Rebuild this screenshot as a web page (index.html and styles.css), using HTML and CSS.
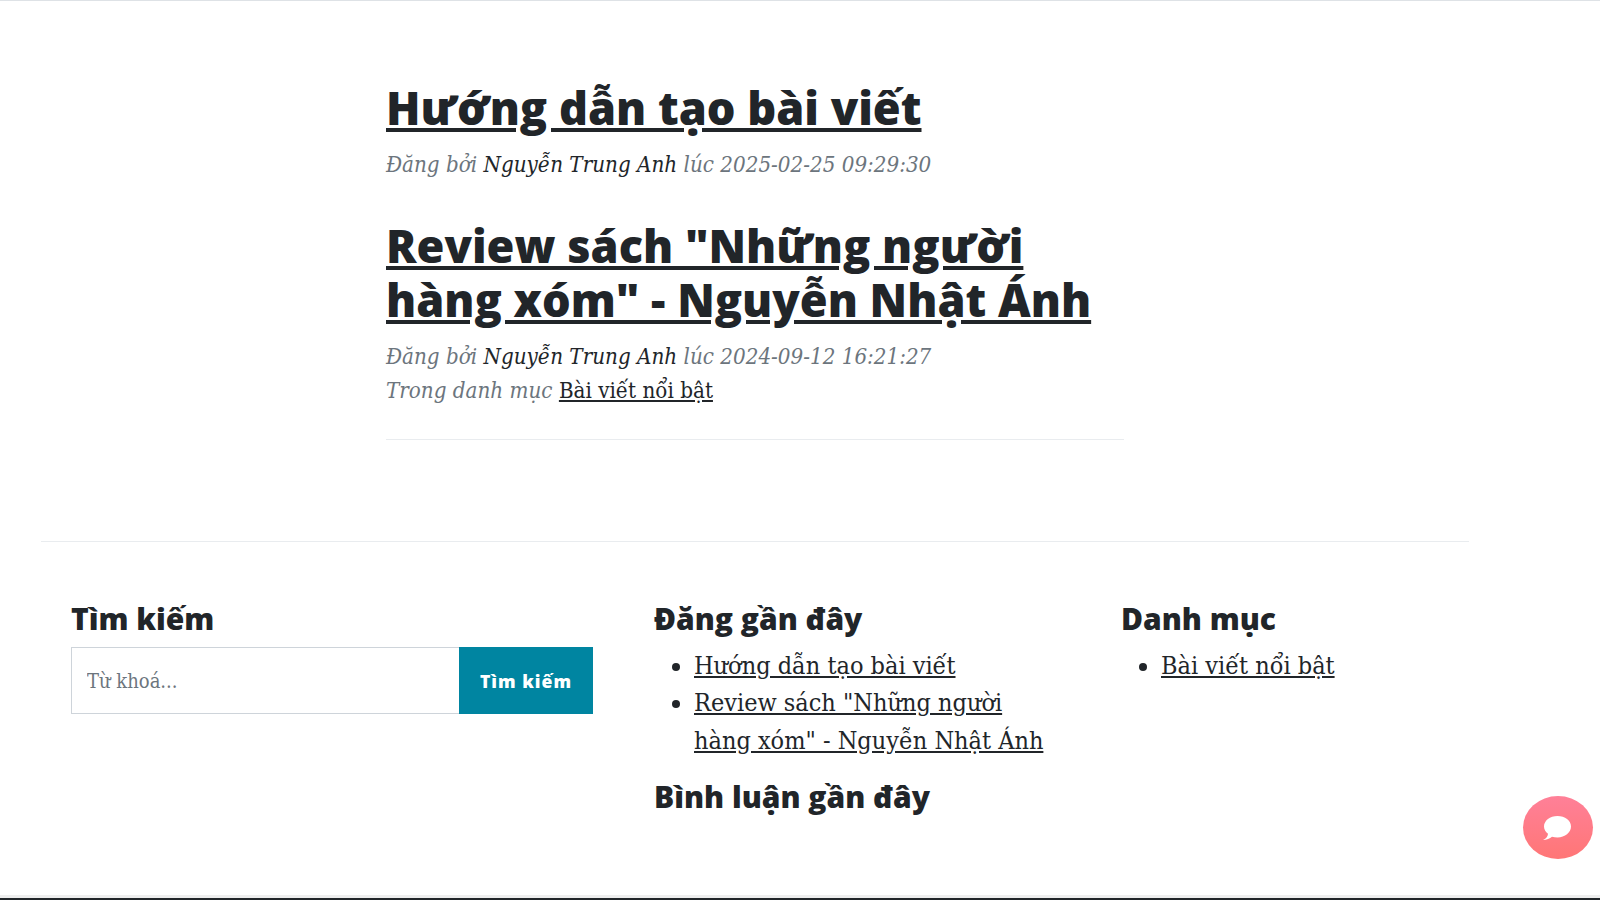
FILE: index.html
```html
<!DOCTYPE html>
<html lang="vi">
<head>
<meta charset="utf-8">
<title>Bài viết</title>
<link rel="stylesheet" href="styles.css">
</head>
<body>
<main class="posts">
  <article class="post">
    <h2 class="post-title"><a href="#">Hướng dẫn tạo bài viết</a></h2>
    <p class="meta"><em>Đăng bởi</em> <span class="author">Nguyễn Trung Anh</span> <em>lúc 2025-02-25 09:29:30</em></p>
  </article>
  <article class="post">
    <h2 class="post-title"><a href="#">Review sách "Những người<br>hàng xóm" - Nguyễn Nhật Ánh</a></h2>
    <p class="meta"><em>Đăng bởi</em> <span class="author">Nguyễn Trung Anh</span> <em>lúc 2024-09-12 16:21:27</em><br><em>Trong danh mục</em> <a class="cat" href="#">Bài viết nổi bật</a></p>
  </article>
  <hr class="rule">
</main>
<footer class="footer">
  <section class="col col-search">
    <h3 class="widget-title">Tìm kiếm</h3>
    <form class="search">
      <input class="search-input" type="text" placeholder="Từ khoá...">
      <button class="search-btn" type="button">Tìm kiếm</button>
    </form>
  </section>
  <section class="col col-recent">
    <h3 class="widget-title">Đăng gần đây</h3>
    <ul class="links">
      <li><a href="#">Hướng dẫn tạo bài viết</a></li>
      <li><a href="#">Review sách "Những người<br>hàng xóm" - Nguyễn Nhật Ánh</a></li>
    </ul>
    <h3 class="widget-title">Bình luận gần đây</h3>
  </section>
  <section class="col col-cat">
    <h3 class="widget-title">Danh mục</h3>
    <ul class="links">
      <li><a href="#">Bài viết nổi bật</a></li>
    </ul>
  </section>
</footer>
<button class="chat" type="button" aria-label="Chat">
  <svg class="chat-icon" width="28" height="24" viewBox="0 0 28 23" preserveAspectRatio="none"><path fill="#fff" d="M14.500 0C7 0 1 4.500 1 10c0 2.800 1.500 5.200 4 7-.2 2.200-1.500 4.500-5 6 3.500 0 7-1 9-3 1.700.4 3.500.5 5.500.5 7.500 0 13.500-4.800 13.500-10.500S22 0 14.500 0z"/></svg>
</button>
</body>
</html>
```
FILE: styles.css
```css
* { box-sizing: border-box; }
html, body { height: 100%; }
body {
  margin: 0;
  height: 900px;
  overflow: hidden;
  background: #fff;
  color: #212529;
  font-family: "DejaVu Serif Condensed", "DejaVu Serif", serif;
  border-top: 1px solid #dee2e6;
  border-bottom: 2px solid #212529;
  box-shadow: inset 0 -3px 0 #eee;
  position: relative;
}
a { color: inherit; }
.posts { width: 738px; margin-left: 386px; padding-top: 80px; }
.post { margin-bottom: 38px; }
.post + .post { margin-bottom: 32px; }
.post-title {
  margin: 0 0 12px;
  font: 800 45.1px/54px "Open Sans", sans-serif;
}
.meta {
  margin: 0;
  font-size: 22.2px;
  line-height: 34px;
  color: #6c757d;
}
.author { font-style: italic; color: #212529; }
.cat { color: #212529; font-style: normal; }
.rule { margin: 0; border: 0; border-top: 1px solid #e9ecef; }
.footer {
  width: 1428px;
  margin: 101px 0 0 41px;
  padding: 57px 0 0 30px;
  border-top: 1px solid #e9ecef;
  display: flex;
}
.col-search { width: 583px; }
.col-recent { width: 467px; }
.col-cat { flex: 1; }
.widget-title {
  margin: 0;
  font: 800 30px/40px "Open Sans", sans-serif;
}
.search { display: flex; width: 522px; height: 67px; margin-top: 8px; }
.search-input {
  flex: 1;
  min-width: 0;
  padding: 0 15px;
  border: 1px solid #ced4da;
  border-right: 0;
  border-radius: 0;
  font: 20px "DejaVu Serif Condensed", serif;
  outline: 0;
}
.search-input::placeholder { color: #6c757d; }
.search-btn {
  width: 134px;
  border: 0;
  background: #0085a1;
  color: #fff;
  font: 800 17.6px "Open Sans", sans-serif;
  letter-spacing: 1px;
}
.links {
  margin: 8px 0 18px;
  padding-left: 40px;
  font-size: 25px;
  line-height: 37.4px;
}
.chat {
  position: absolute;
  left: 1523px;
  top: 795px;
  width: 70px;
  height: 63px;
  padding: 0;
  border: 0;
  border-radius: 50%;
  background: linear-gradient(#ff8098, #ff7676);
  display: flex;
  align-items: center;
  justify-content: center;
}
.chat-icon { margin-right: 2px; }
```
